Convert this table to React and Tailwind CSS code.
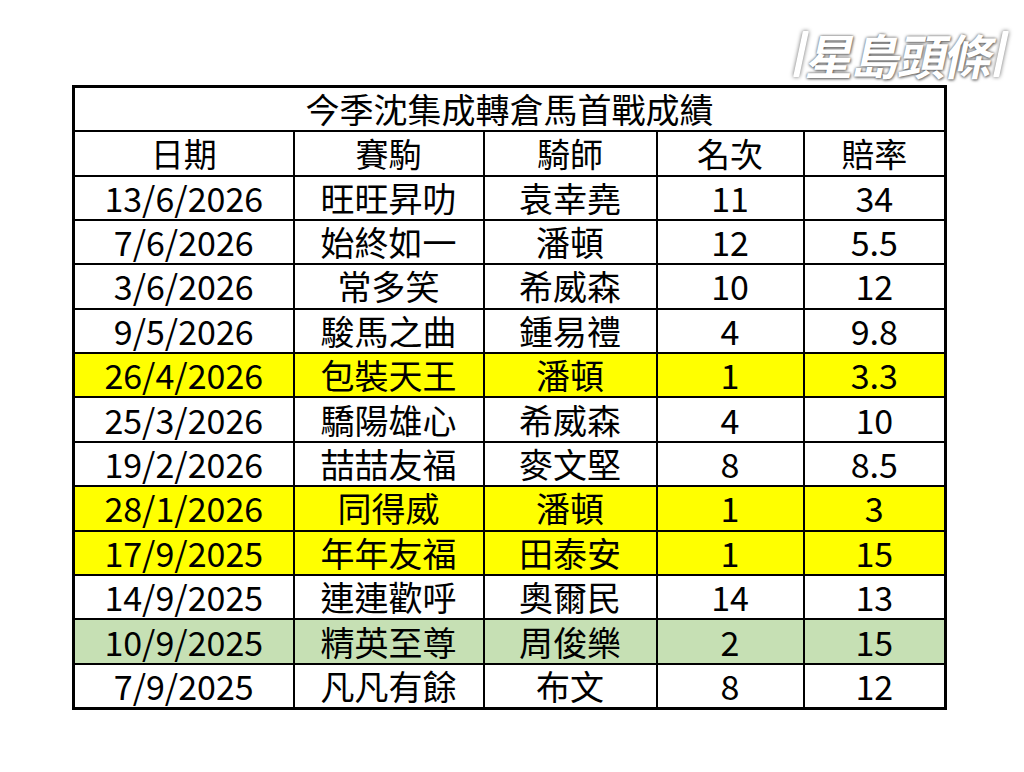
const rows = [
  ["13/6/2026", "旺旺昇叻", "袁幸堯", "11", "34", ""],
  ["7/6/2026", "始終如一", "潘頓", "12", "5.5", ""],
  ["3/6/2026", "常多笑", "希威森", "10", "12", ""],
  ["9/5/2026", "駿馬之曲", "鍾易禮", "4", "9.8", ""],
  ["26/4/2026", "包裝天王", "潘頓", "1", "3.3", "y"],
  ["25/3/2026", "驕陽雄心", "希威森", "4", "10", ""],
  ["19/2/2026", "喆喆友福", "麥文堅", "8", "8.5", ""],
  ["28/1/2026", "同得威", "潘頓", "1", "3", "y"],
  ["17/9/2025", "年年友福", "田泰安", "1", "15", "y"],
  ["14/9/2025", "連連歡呼", "奧爾民", "14", "13", ""],
  ["10/9/2025", "精英至尊", "周俊樂", "2", "15", "g"],
  ["7/9/2025", "凡凡有餘", "布文", "8", "12", ""],
];

function Logo() {
  return (
    <div className="absolute top-[30px] right-[20px] flex items-center gap-[5px] -skew-x-12">
      <div className="w-[6px] h-[46px] bg-white shadow-[0_0_4px_#666] rounded-[1px]" />
      <span
        className="text-white font-bold text-[48px] leading-none tracking-[-2px] [text-shadow:0_0_3px_#555,1px_1px_3px_#777]"
        style={{ fontFamily: '"Noto Sans CJK TC", sans-serif' }}
      >
        星島頭條
      </span>
      <div className="w-[6px] h-[46px] bg-white shadow-[0_0_4px_#666] rounded-[1px]" />
    </div>
  );
}

export default function App() {
  return (
    <div
      className="relative w-[1024px] h-[772px] bg-white pl-[72px] pt-[85px] text-black"
      style={{ fontFamily: '"Noto Sans CJK TC", "Noto Sans", sans-serif' }}
    >
      <Logo />

      <table className="border-collapse border-[3px] border-black table-fixed w-[872px]">
        <colgroup>
          <col className="w-[220px]" />
          <col className="w-[190px]" />
          <col className="w-[173px]" />
          <col className="w-[147px]" />
          <col className="w-[142px]" />
        </colgroup>
        <tbody>
          {/* TITLE */}
          <tr className="h-[44px]">
            <td colSpan={5} className="border-2 border-black text-center text-[34px] leading-none">
              今季沈集成轉倉馬首戰成績
            </td>
          </tr>

          {/* HEADER */}
          <tr className="h-[45px]">
            {["日期", "賽駒", "騎師", "名次", "賠率"].map((h) => (
              <td key={h} className="border-2 border-black text-center text-[33px] leading-none">
                {h}
              </td>
            ))}
          </tr>

          {rows.map((r) => (
            <tr
              key={r[0]}
              className={`h-[44.4px] ${
                r[5] === "y" ? "bg-[#ffff00]" : r[5] === "g" ? "bg-[#c6e0b4]" : "bg-white"
              }`}
            >
              {r.slice(0, 5).map((c, i) => (
                <td
                  key={i}
                  className="border-2 border-black text-center text-[34px] leading-none"
                >
                  {c}
                </td>
              ))}
            </tr>
          ))}
        </tbody>
      </table>
    </div>
  );
}
